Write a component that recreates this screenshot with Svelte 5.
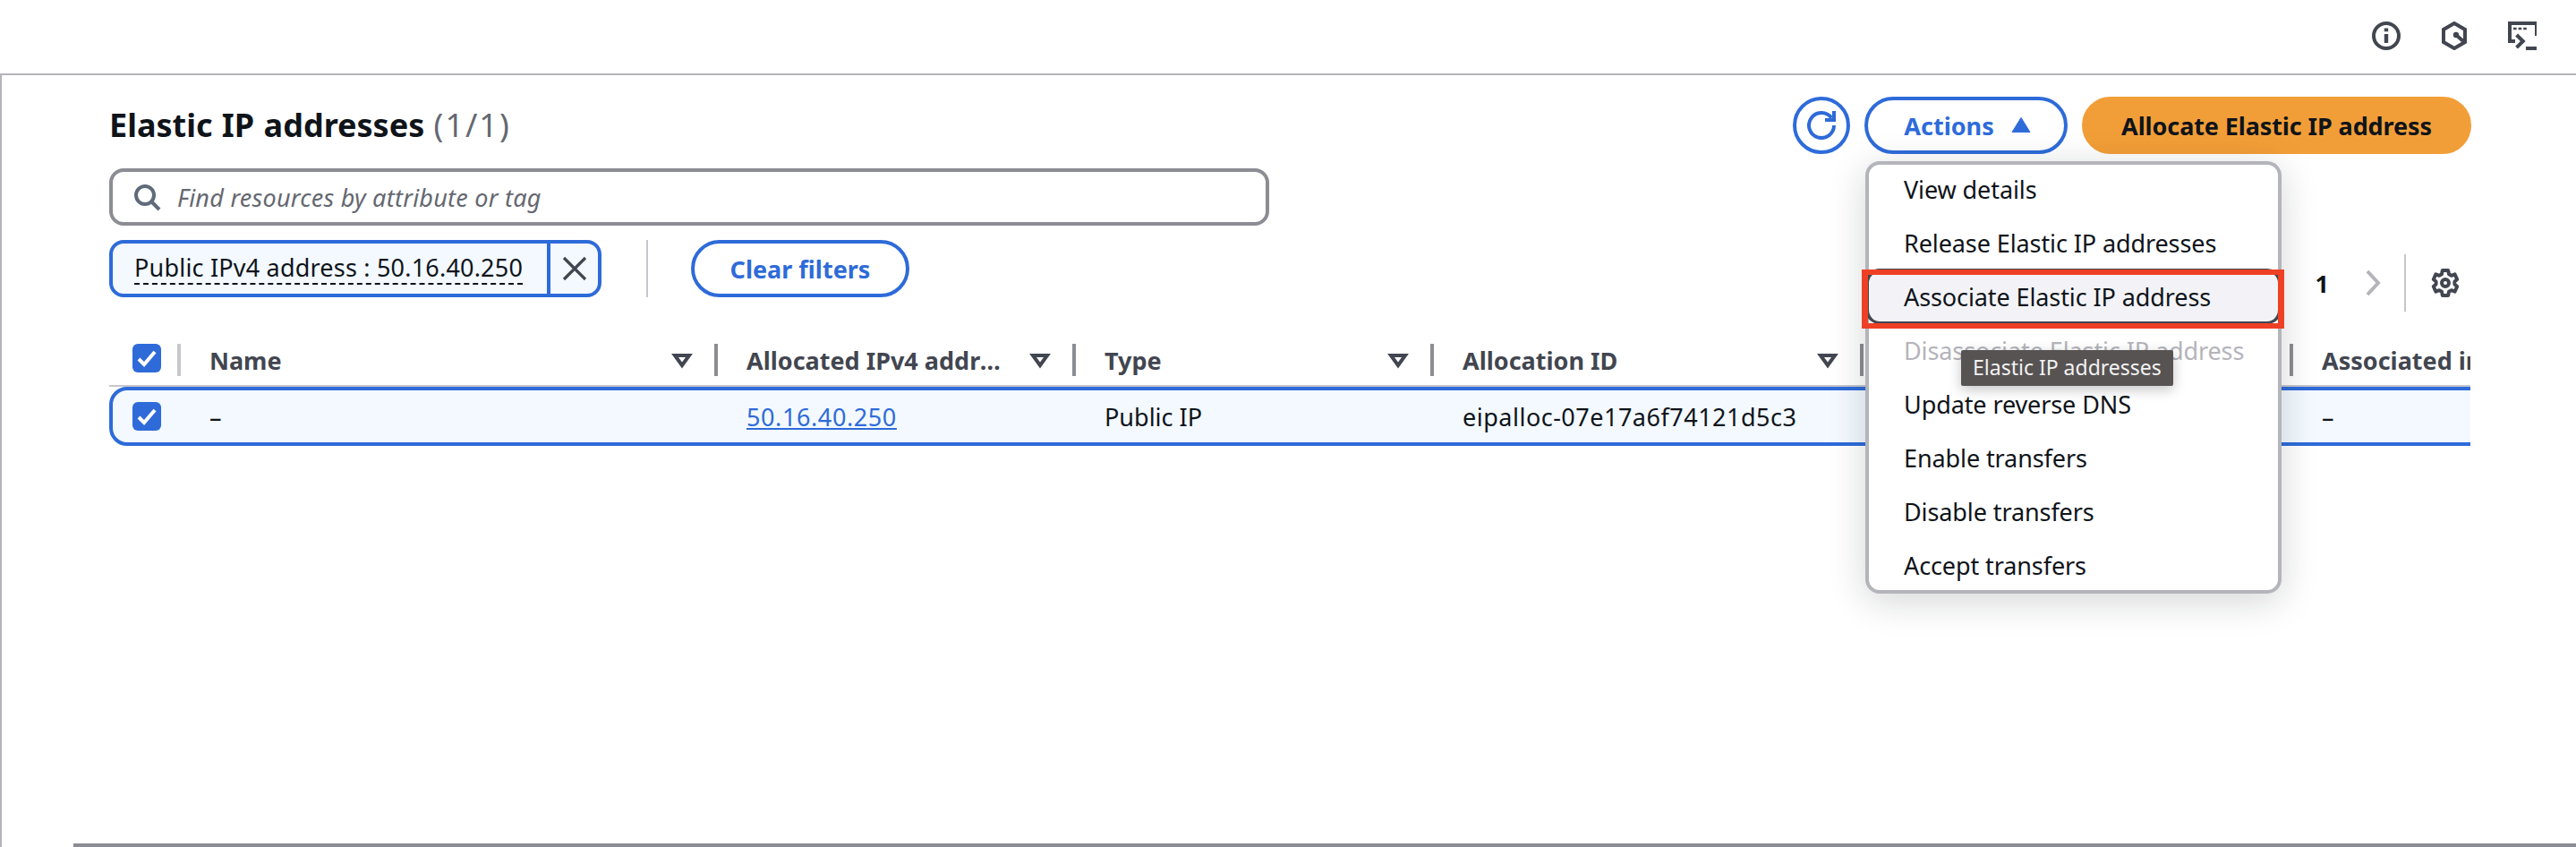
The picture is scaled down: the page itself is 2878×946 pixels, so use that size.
<script>
  const actions = [
    { label: 'View details' },
    { label: 'Release Elastic IP addresses' },
    { label: 'Associate Elastic IP address', hot: true },
    { label: 'Disassociate Elastic IP address', off: true },
    { label: 'Update reverse DNS' },
    { label: 'Enable transfers' },
    { label: 'Disable transfers' },
    { label: 'Accept transfers' }
  ];
  const columns = [
    { label: 'Name', filter: true },
    { label: 'Allocated IPv4 address', filter: true },
    { label: 'Type', filter: true },
    { label: 'Allocation ID', filter: true },
    { label: '', filter: false },
    { label: 'Associated instance ID', filter: false }
  ];
</script>

<div class="page">
  <header class="topbar">
    <svg class="icon" viewBox="0 0 16 16"><circle cx="8" cy="8" r="7"/><path class="stem" d="M8 12V7M8 5.6V3.8"/></svg>
    <svg class="icon" viewBox="0 0 16 16"><path d="M8 1l6 3.5v7L8 15l-6-3.5v-7z"/><path d="M9 7.5l4 3.5"/><circle class="solid" cx="9" cy="7.5" r="1.1"/></svg>
    <svg class="icon" viewBox="0 0 16 16"><path d="M16 8V1H1v10h3"/><path d="M4.8 7.5L8.4 11l-3.6 3.6"/><path d="M10 15h6"/><path class="dots" d="M3 4h1.8M5.8 4h1.8M8.6 4h1.8"/></svg>
  </header>

  <main class="main">
    <div class="content">
      <div class="head">
        <h1>Elastic IP addresses <span>(1/1)</span></h1>
        <div class="btns">
          <button class="btn round" aria-label="Refresh">
            <svg class="icon" viewBox="0 0 16 16"><path d="M10 5h5V0"/><path d="M15 8a7 7 0 1 1-1.37-4.16"/></svg>
          </button>
          <div class="dropdown">
            <button class="btn act">Actions
              <svg class="icon" viewBox="0 0 16 16"><path class="fill" d="M3 11.8h10L8 3.7z"/></svg>
            </button>
            <ul class="menu">
              {#each actions as a}
                <li class:hot={a.hot} class:off={a.off}>{a.label}{#if a.hot}<i class="mark"></i>{/if}</li>
              {/each}
            </ul>
            <div class="tip">Elastic IP addresses</div>
          </div>
          <button class="btn primary">Allocate Elastic IP address</button>
        </div>
      </div>

      <div class="search">
        <svg class="icon" viewBox="0 0 16 16"><circle cx="7" cy="7" r="5"/><path d="M15 15l-4.5-4.5"/></svg>
        <span>Find resources by attribute or tag</span>
      </div>

      <div class="filters">
        <div class="token">
          <span class="tk-text"><span>Public IPv4 address : 50.16.40.250</span></span>
          <span class="tk-x">
            <svg class="icon" viewBox="0 0 16 16"><path d="M2 2l12 12M14 2L2 14"/></svg>
          </span>
        </div>
        <i class="sep"></i>
        <button class="btn clear">Clear filters</button>
        <div class="pager">
          <b>1</b>
          <svg class="icon chev" viewBox="0 0 16 16"><path d="M5 1.5l6 6.5-6 6.5"/></svg>
          <i class="vline"></i>
          <svg class="icon gear" viewBox="0 0 16 16"><path d="M6.4 1H9.6L10 3.1L11.4 3.9L13.3 3.2L14.6 6L13.2 7.2V8.8L14.6 10L13.3 12.8L11.4 12.1L10 12.9L9.6 15H6.4L6 12.9L4.6 12.1L2.7 12.8L1.4 10L2.8 8.8V7.2L1.4 6L2.7 3.2L4.6 3.9L6 3.1Z"/><circle cx="8" cy="8" r="2"/></svg>
        </div>
      </div>

      <div class="table">
        <div class="grid thead">
          <div class="cell first">
            <span class="check"><svg viewBox="0 0 16 16"><path d="M3.5 8.5l3 3 6-7"/></svg></span>
            <i class="rule light"></i>
          </div>
          {#each columns as c, i}
            <div class="cell th">
              <span class="label">{c.label}</span>
              {#if c.filter}
                <svg class="icon caret" viewBox="0 0 16 16"><path d="M4 5.5h8L8 11z"/></svg>
              {/if}
              {#if i < columns.length - 1}<i class="rule"></i>{/if}
            </div>
          {/each}
        </div>
        <div class="grid row">
          <div class="cell first">
            <span class="check"><svg viewBox="0 0 16 16"><path d="M3.5 8.5l3 3 6-7"/></svg></span>
          </div>
          <div class="cell td">–</div>
          <div class="cell td"><a href="#ip">50.16.40.250</a></div>
          <div class="cell td">Public IP</div>
          <div class="cell td wide">eipalloc-07e17a6f74121d5c3</div>
          <div class="cell td"></div>
          <div class="cell td">–</div>
        </div>
      </div>
    </div>
    <div class="bottom"></div>
  </main>
</div>

<style>
  :global(body) { margin: 0; background: #fff; }
  .page {
    width: 2878px; height: 946px; overflow: hidden; display: flex; flex-direction: column;
    font-family: "Noto Sans", "Open Sans", sans-serif; font-size: 27px; color: #0f141a;
  }
  .icon { width: 32px; height: 32px; flex: none; fill: none; stroke: currentColor; stroke-width: 2; display: block; }
  .icon .solid { fill: currentColor; stroke-width: 1; }
  .icon .fill { fill: currentColor; stroke-width: 0.5; stroke-linejoin: round; }
  .icon .dots { stroke-width: 1.3; }
  .icon .stem { stroke-width: 2.2; }
  .gear { stroke-linejoin: round; }

  .topbar {
    height: 82px; flex: none; box-sizing: border-box; display: flex; justify-content: flex-end;
    gap: 44px; padding: 24px 44px 0 0; color: #424650;
  }
  .main {
    flex: 1; display: flex; flex-direction: column; justify-content: space-between;
    border-top: 2px solid #b4b4bb; border-left: 2px solid #b4b4bb;
  }
  .content { padding: 24px 0 0 120px; width: 2638px; }
  .bottom { height: 4px; margin-left: 80px; background: #8c8c94; }

  .head { display: flex; justify-content: space-between; align-items: center; height: 64px; }
  h1 { margin: 0; font-size: 36px; font-weight: 700; line-height: 64px; word-spacing: 1px; }
  h1 span { font-weight: 400; color: #656871; letter-spacing: 2px; }
  .btns { display: flex; gap: 16px; margin-right: -1px; }
  .btn {
    height: 64px; box-sizing: border-box; border: 4px solid #2e6bd9; border-radius: 32px; background: #fff;
    color: #2e6bd9; font: 700 27px "Noto Sans", "Open Sans", sans-serif; padding: 0; display: flex;
    align-items: center; justify-content: center;
  }
  .round { width: 64px; }
  .dropdown { position: relative; }
  .act { width: 227px; gap: 14px; padding-left: 8px; }
  .primary { width: 435px; background: #f29e38; border-color: #f29e38; color: #0f141a; letter-spacing: -0.1px; }

  .menu {
    position: absolute; left: 1px; top: 72px; width: 465px; height: 483px; box-sizing: border-box; margin: 0;
    padding: 0; list-style: none; background: #fff; border: 4px solid #b4b4bb; border-radius: 16px;
    box-shadow: 0 8px 40px rgba(15, 20, 26, 0.18); z-index: 5;
  }
  .menu li {
    height: 60px; box-sizing: border-box; padding-left: 39px; line-height: 60px; white-space: nowrap; position: relative;
    letter-spacing: -0.1px;
  }
  .menu li:first-child { margin-top: -2px; }
  .menu li.off { color: #b4b4bb; }
  .menu li.hot {
    height: 62px; margin: -2px -4px 0; background: #f3f3f7; border: 4px solid #414750; border-bottom-width: 3px;
    border-radius: 16px; line-height: 56px;
  }
  .mark {
    position: absolute; left: -8px; top: -3px; width: 472px; height: 66px; box-sizing: border-box;
    border: solid #ee4025; border-width: 6px 7px; pointer-events: none;
  }
  .tip {
    position: absolute; left: 108px; top: 283px; width: 237px; height: 40px; box-sizing: border-box; padding-left: 13px;
    background: #575353; color: #f2f2f2; font-size: 23px; line-height: 38px; border-radius: 2px; white-space: nowrap;
    box-shadow: 0 4px 14px rgba(15, 20, 26, 0.25); z-index: 6;
  }

  .search {
    margin-top: 16px; width: 1296px; height: 64px; box-sizing: border-box; border: 4px solid #8c8c94;
    border-radius: 16px; display: flex; align-items: center; gap: 18px; padding-left: 22px; color: #5f6b7a;
  }
  .search span { font-style: italic; color: #656871; letter-spacing: 0.25px; }

  .filters { margin-top: 16px; display: flex; align-items: flex-start; }
  .token {
    width: 550px; height: 64px; box-sizing: border-box; border: 4px solid #2e6bd9; border-radius: 16px;
    background: #f3f9ff; display: flex; overflow: hidden;
  }
  .tk-text { flex: 1; padding-left: 24px; line-height: 54px; white-space: nowrap; letter-spacing: 0.2px; }
  .tk-text span { border-bottom: 2px dashed #0f141a; display: inline-block; line-height: 34px; }
  .tk-x { width: 57px; box-sizing: border-box; border-left: 4px solid #2e6bd9; display: flex; align-items: center; justify-content: center; color: #424650; }
  .tk-x .icon { stroke-width: 1.6; }
  .sep { width: 2px; height: 64px; background: #c6c6cd; margin: 0 48px 0 50px; }
  .clear { width: 244px; }
  .pager { margin: 16px 0 0 auto; display: flex; align-items: center; height: 64px; color: #424650; padding-right: 12px; }
  .pager b { color: #0f141a; margin-right: 33px; }
  .chev { color: #b4b4bb; margin-right: 19px; }
  .vline { width: 2px; height: 64px; background: #c6c6cd; margin-right: 28px; }

  .table { margin-top: 36px; overflow: hidden; }
  .grid { display: grid; grid-template-columns: 78px 600px 400px 400px 480px 480px 400px; width: 2838px; box-sizing: border-box; }
  .thead { height: 48px; align-items: start; border-bottom: 2px solid #c6c6cd; }
  .row { height: 66px; background: #f3f9ff; border: 4px solid #2e6bd9; border-radius: 20px; grid-template-columns: 74px 600px 400px 400px 480px 480px 400px; }
  .cell { display: flex; align-items: center; box-sizing: border-box; position: relative; min-width: 0; }
  .first { padding-left: 26px; height: 32px; }
  .row .first { padding-left: 22px; height: 58px; }
  .check { width: 32px; height: 32px; border-radius: 6px; background: #2e6bd9; display: block; }
  .check svg { width: 32px; height: 32px; fill: none; stroke: #fff; stroke-width: 2; display: block; }
  .rule { position: absolute; right: -2px; top: 0; width: 4px; height: 36px; background: #8c8c94; }
  .rule.light { background: #c6c6cd; }
  .th { height: 36px; padding: 0 28px 0 34px; gap: 20px; color: #424650; font-weight: 700; }
  .label { flex: 1; overflow: hidden; white-space: nowrap; text-overflow: ellipsis; min-width: 0; }
  .caret { margin-right: -6px; }
  .td { height: 58px; padding-left: 34px; white-space: nowrap; }
  .wide { letter-spacing: 0.5px; }
  a { color: #2e6bd9; letter-spacing: 0.6px; }
</style>
